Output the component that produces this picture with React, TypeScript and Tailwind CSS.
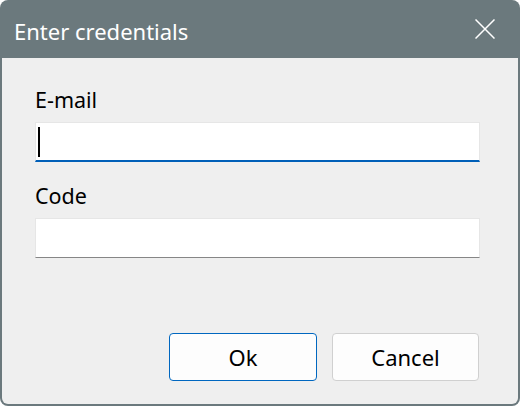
import React from 'react';

const font = { fontFamily: '"Segoe UI", "Noto Sans", "Open Sans", sans-serif' };

function CloseIcon() {
    return (
        <svg width="20" height="20" viewBox="0 0 20 20" fill="none" stroke="white" strokeWidth="1.5">
            <path d="M0.5 0.5 L19.5 19.5 M19.5 0.5 L0.5 19.5" />
        </svg>
    );
}

export default function App() {
    return (
        <div className="w-[520px] h-[406px] bg-white" style={font}>
            <div className="w-full h-full flex flex-col rounded-[8px] bg-[#6b797d] px-[2px] pb-[2px]">
                <div className="h-[58px] flex items-center justify-between pl-[12px] pr-[23px]">
                    <span className="text-[22px] text-white leading-none pt-[4px]">Enter credentials</span>
                    <CloseIcon />
                </div>
                <div className="flex-1 flex flex-col bg-[#efefef] rounded-b-[6px] pl-[33px] pr-[38px]">
                    <label className="mt-[28px] text-[21.5px] leading-[28px] text-black">E-mail</label>
                    <div className="mt-[8px] h-[40px] bg-white border border-[#e6e6e6] border-b-2 border-b-[#005fb8] flex items-center pl-[2px]">
                        <div className="w-[2px] h-[30px] bg-black" />
                    </div>
                    <label className="mt-[20px] text-[21.5px] leading-[28px] text-black">Code</label>
                    <div className="mt-[8px] h-[40px] bg-white border border-[#e6e6e6] border-b-[#868686]" />
                    <div className="mt-auto mb-[23px] flex justify-end gap-[15px] pr-[1px]">
                        <button className="w-[148px] h-[48px] rounded-[4px] bg-[#fdfdfd] border border-[#0067c0] text-[22px] text-black">Ok</button>
                        <button className="w-[147px] h-[48px] rounded-[4px] bg-[#fdfdfd] border border-[#d0d0d0] text-[22px] text-black">Cancel</button>
                    </div>
                </div>
            </div>
        </div>
    );
}
